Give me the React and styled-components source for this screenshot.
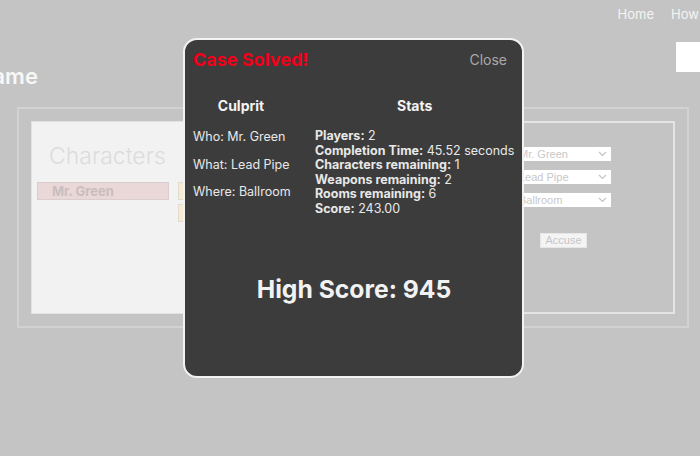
import React from "react";
import styled, { createGlobalStyle } from "styled-components";

const GlobalStyle = createGlobalStyle`
  html, body {
    margin: 0;
    padding: 0;
    background: #c4c4c4;
    overflow: hidden;
    font-family: Inter, "Noto Sans", "Liberation Sans", sans-serif;
  }
  * { box-sizing: border-box; }
`;

const characters = ["Mr. Green"];
const weapons = ["", ""];
const rooms = ["", "", "", "", "", ""];

const stats = [
  ["Players", "2"],
  ["Completion Time", "45.52 seconds"],
  ["Characters remaining", "1"],
  ["Weapons remaining", "2"],
  ["Rooms remaining", "6"],
  ["Score", "243.00"],
];

const App = () => {
  return (
    <>
      <GlobalStyle />
      <Page>
        <Nav>
          <NavLink>Home</NavLink>
          <NavLink>How to Play</NavLink>
        </Nav>
        <TitleRow>
          <Title>Clue Game</Title>
          <SearchBox />
        </TitleRow>
        <Board>
          <CardsPanel>
            <PanelTitle>Characters</PanelTitle>
            <CardGrid>
              <CardColumn>
                {characters.map((c) => (
                  <Card key={c} $kind="character">
                    {c}
                  </Card>
                ))}
              </CardColumn>
              <CardColumn>
                {weapons.map((w, i) => (
                  <Card key={i} $kind="weapon">
                    {w}
                  </Card>
                ))}
              </CardColumn>
              <CardColumn>
                {rooms.map((r, i) => (
                  <Card key={i} $kind="room">
                    {r}
                  </Card>
                ))}
              </CardColumn>
            </CardGrid>
          </CardsPanel>
          <AccusePanel>
            {["Mr. Green", "Lead Pipe", "Ballroom"].map((v) => (
              <Select key={v}>
                <span>{v}</span>
                <svg width="9" height="6" viewBox="0 0 9 6">
                  <path
                    d="M1 1l3.5 3.5L8 1"
                    fill="none"
                    stroke="#c4c4c4"
                    strokeWidth="1.2"
                  />
                </svg>
              </Select>
            ))}
            <AccuseButton>Accuse</AccuseButton>
          </AccusePanel>
        </Board>

        <Modal>
          <ModalHeader>
            <SolvedTitle>Case Solved!</SolvedTitle>
            <CloseLink>Close</CloseLink>
          </ModalHeader>
          <Columns>
            <CulpritCol>
              <ColHeading>Culprit</ColHeading>
              <CulpritLine>Who: Mr. Green</CulpritLine>
              <CulpritLine>What: Lead Pipe</CulpritLine>
              <CulpritLine>Where: Ballroom</CulpritLine>
            </CulpritCol>
            <StatsCol>
              <ColHeading>Stats</ColHeading>
              <StatList>
                {stats.map(([k, v]) => (
                  <StatLine key={k}>
                    <b>{k}:</b> {v}
                  </StatLine>
                ))}
              </StatList>
            </StatsCol>
          </Columns>
          <HighScore>High Score: 945</HighScore>
        </Modal>
      </Page>
    </>
  );
};

export default App;

const Page = styled.div`
  position: relative;
  width: 700px;
  height: 456px;
  overflow: hidden;
`;

const Nav = styled.nav`
  display: flex;
  justify-content: flex-end;
  gap: 17px;
  height: 28px;
  align-items: center;
  margin-right: -44px;
`;

const NavLink = styled.a`
  color: #f4f4f4;
  font-size: 13px;
  white-space: nowrap;
`;

const TitleRow = styled.div`
  display: flex;
  justify-content: space-between;
  align-items: flex-start;
  height: 79px;
  padding-top: 14px;
  margin-right: -80px;
`;

const Title = styled.h1`
  margin: 21px 0 0 -78px;
  color: #f7f7f7;
  font-size: 22px;
  font-weight: 600;
  line-height: 26px;
  white-space: nowrap;
`;

const SearchBox = styled.div`
  width: 104px;
  height: 30px;
  background: #ffffff;
`;

const Board = styled.div`
  margin-left: 17px;
  width: 672px;
  height: 221px;
  border: 2px solid #d2d2d2;
  padding: 12px 12px;
  display: flex;
  gap: 10px;
`;

const CardsPanel = styled.div`
  width: 429px;
  background: #f2f2f2;
  border: 1px solid #e2e2e2;
  padding: 0 5px;
`;

const PanelTitle = styled.div`
  margin: 20px 0 0 12px;
  color: #dcdcdc;
  font-size: 23px;
  font-weight: 300;
  line-height: 28px;
`;

const CardGrid = styled.div`
  display: grid;
  grid-template-columns: repeat(3, 132px);
  gap: 9px;
  margin-top: 12px;
`;

const CardColumn = styled.div`
  display: flex;
  flex-direction: column;
  gap: 4px;
`;

const Card = styled.div`
  height: 18px;
  padding-left: 14px;
  font-size: 13px;
  font-weight: 700;
  line-height: 16px;
  color: #c9bebe;
  background: ${(p) => (p.$kind === "character" ? "#ead7d7" : "#f6ecd3")};
  border: 1px solid ${(p) => (p.$kind === "character" ? "#d9cdcd" : "#e0dbcd")};
`;

const AccusePanel = styled.div`
  flex: 1;
  border: 2px solid #e4e4e4;
  padding: 24px 0 0 43px;
  display: flex;
  flex-direction: column;
  align-items: flex-start;
  gap: 9px;
`;

const Select = styled.div`
  width: 96px;
  height: 14px;
  background: #ffffff;
  display: flex;
  align-items: center;
  justify-content: space-between;
  padding: 0 4px 0 4px;
  font-size: 11px;
  color: #c8c8c8;
  font-family: "Liberation Sans", Arial, sans-serif;
`;

const AccuseButton = styled.div`
  margin: 17px 0 0 25px;
  width: 47px;
  height: 15px;
  background: #f4f4f4;
  border: 1px solid #e6e6e6;
  color: #c6c6c6;
  font-size: 11px;
  font-family: "Liberation Sans", Arial, sans-serif;
  text-align: center;
  line-height: 13px;
`;

const Modal = styled.div`
  position: absolute;
  left: 183px;
  top: 38px;
  width: 341px;
  height: 340px;
  background: #3c3c3c;
  border: 2px solid #f2f2f2;
  border-radius: 14px;
  padding: 7px 15px 0 8px;
  display: flex;
  flex-direction: column;
`;

const ModalHeader = styled.div`
  display: flex;
  justify-content: space-between;
  align-items: center;
  height: 24px;
`;

const SolvedTitle = styled.div`
  color: #f2001a;
  font-size: 18px;
  font-weight: 700;
`;

const CloseLink = styled.div`
  color: #a9a9a9;
  font-size: 14px;
`;

const Columns = styled.div`
  display: flex;
  gap: 26px;
  margin-top: 26px;
`;

const CulpritCol = styled.div`
  display: flex;
  flex-direction: column;
  width: 96px;
`;

const StatsCol = styled.div`
  display: flex;
  flex-direction: column;
  flex: 1;
`;

const ColHeading = styled.div`
  text-align: center;
  color: #f4f4f4;
  font-size: 14px;
  font-weight: 700;
  line-height: 18px;
  margin-bottom: 14px;
`;

const CulpritLine = styled.div`
  color: #e8e8e8;
  font-size: 12.5px;
  line-height: 16px;
  margin-bottom: 11.5px;
  white-space: nowrap;
`;

const StatList = styled.div`
  display: flex;
  flex-direction: column;
`;

const StatLine = styled.div`
  color: #e8e8e8;
  font-size: 12.5px;
  line-height: 14.6px;
  white-space: nowrap;
  & b {
    font-weight: 700;
  }
`;

const HighScore = styled.div`
  margin: 57px 0 0 8px;
  text-align: center;
  color: #f2f2f2;
  font-size: 24.7px;
  font-weight: 700;
  line-height: 30px;
`;
